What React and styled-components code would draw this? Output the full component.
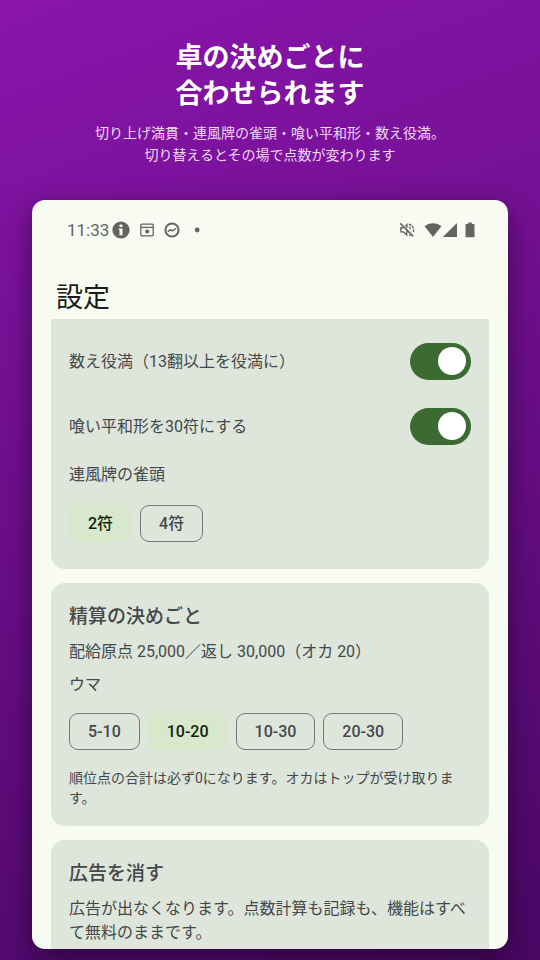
import React, { useState } from "react";
import styled, { createGlobalStyle } from "styled-components";

const GlobalStyle = createGlobalStyle`
  *, *::before, *::after {
    box-sizing: border-box;
  }
  body {
    margin: 0;
  }
  h1, h2, h3, p {
    margin: 0;
  }
  button, input {
    font: inherit;
  }
`;

//page
const Page = styled.div`
  display: flex;
  flex-direction: column;
  height: 100vh;
  padding: 38px 32px 11px;
  overflow: hidden;
  background: linear-gradient(160deg, #8a15ac 0%, #4a0764 100%);
  font-family: Roboto, "Noto Sans CJK JP", sans-serif;
  color: #44484a;
`;

const Intro = styled.header`
  margin-bottom: 35px;
  text-align: center;
  font-family: "Noto Sans CJK JP", sans-serif;
`;

const Headline = styled.h1`
  margin-bottom: 11px;
  font-size: 27px;
  line-height: 36px;
  font-weight: 700;
  color: #fff;
`;

const Lead = styled.p`
  font-size: 14px;
  line-height: 22px;
  color: #f0d9f6;
`;

const Phone = styled.main`
  display: flex;
  flex: 1;
  flex-direction: column;
  min-height: 0;
  overflow: hidden;
  border-radius: 13px;
  background: #f8fbf2;
  box-shadow: 0 10px 30px rgba(0, 0, 0, 0.45);
`;

//status bar
const StatusBar = styled.div`
  display: flex;
  flex: none;
  align-items: center;
  justify-content: space-between;
  height: 60px;
  padding: 0 33px 0 35px;
  color: #62655f;
`;

const StatusGroup = styled.div`
  display: flex;
  align-items: center;
  gap: ${(props) => props.$gap}px;
`;

const Clock = styled.span`
  margin-right: -7px;
  font-size: 17px;
  line-height: 20px;
`;

const Glyph = styled.svg`
  display: block;
  flex: none;
`;

const ScreenTitle = styled.h2`
  flex: none;
  padding: 20px 24px 3px;
  font-size: 27px;
  line-height: 36px;
  font-weight: 400;
  color: #1a1c19;
`;

//settings
const Cards = styled.div`
  display: flex;
  flex-direction: column;
  flex: 1;
  gap: 14px;
  min-height: 0;
  padding: 0 19px;
  overflow: hidden;
`;

const Card = styled.section`
  display: flex;
  flex: none;
  flex-direction: column;
  gap: 9px;
  padding: ${(props) => (props.$scrolled ? "14px" : "20px")} 18px 18px;
  border-radius: ${(props) => (props.$scrolled ? "0 0 14px 14px" : "14px")};
  background: #dee5da;
`;

const CardTitle = styled.h3`
  font-size: 19px;
  line-height: 28px;
  font-weight: 500;
`;

const Text = styled.p`
  font-size: 16px;
  line-height: 24px;
`;

const Note = styled.p`
  font-size: 14px;
  line-height: 20px;
`;

const SwitchRow = styled.label`
  display: flex;
  align-items: center;
  justify-content: space-between;
  min-height: 56px;
  font-size: 16px;
  line-height: 24px;
`;

const SwitchLabel = styled.span`
  padding-top: 2px;
`;

const Switch = styled.input`
  appearance: none;
  display: flex;
  align-items: center;
  justify-content: ${(props) => (props.checked ? "flex-end" : "flex-start")};
  flex: none;
  width: 61px;
  height: 37px;
  margin: 0;
  padding: 0 5px;
  border-radius: 19px;
  background: ${(props) => (props.checked ? "#3b6a32" : "#73796e")};
  cursor: pointer;

  &::before {
    content: "";
    width: 28px;
    height: 28px;
    border-radius: 50%;
    background: #fff;
  }
`;

const ChipGroup = styled.div`
  display: flex;
  align-items: center;
  gap: 8px;
  min-height: 37px;
  margin: ${(props) => (props.$tight ? "7px" : "9px")} 0 9px;
`;

const ChipButton = styled.button`
  height: 37px;
  padding: 0 18px;
  border: 1px solid ${(props) => (props.$active ? "#d7e8cd" : "#75787a")};
  border-radius: 9px;
  background: ${(props) => (props.$active ? "#d7e8cd" : "transparent")};
  color: ${(props) => (props.$active ? "#121f0e" : "#44484a")};
  font-size: 16px;
  line-height: 24px;
  font-weight: 500;
  white-space: nowrap;
  cursor: pointer;
`;

const Chips = ({ label, options, value, onChange, tight }) => (
  <ChipGroup role="group" aria-label={label} $tight={tight}>
    {options.map((option) => (
      <ChipButton
        key={option}
        type="button"
        $active={option === value}
        aria-pressed={option === value}
        onClick={() => onChange(option)}
      >
        {option}
      </ChipButton>
    ))}
  </ChipGroup>
);

const InfoIcon = () => (
  <Glyph width="18" height="18" viewBox="0 0 18 18">
    <circle cx="9" cy="9" r="8.6" fill="currentColor" />
    <path d="M7.5 3.5h3v2.4h-3zM6.8 7.4h3.7v6.8H7.5V9H6.8z" fill="#f8fbf2" />
  </Glyph>
);

const CalendarIcon = () => (
  <Glyph width="14" height="14" viewBox="0 0 14 14" fill="none">
    <rect
      x="0.8"
      y="1.2"
      width="12.4"
      height="11.6"
      rx="1"
      stroke="currentColor"
      strokeWidth="1.3"
    />
    <path d="M1 4.4h12" stroke="currentColor" strokeWidth="1.3" />
    <circle cx="7.2" cy="8.6" r="2" fill="currentColor" />
  </Glyph>
);

const ActivityIcon = () => (
  <Glyph width="16" height="16" viewBox="0 0 16 16" fill="none" stroke="currentColor">
    <circle cx="8" cy="8" r="6.6" strokeWidth="2" />
    <path d="M3.8 9.6l2.8-2 2 1.2 3.6-2.6" strokeWidth="1.4" />
  </Glyph>
);

const DotIcon = () => (
  <Glyph width="12" height="6" viewBox="0 0 12 6">
    <circle cx="7.2" cy="3" r="2.4" fill="currentColor" />
  </Glyph>
);

const MutedIcon = () => (
  <Glyph width="18" height="16" viewBox="0 0 18 16" fill="none" stroke="currentColor">
    <path d="M1.2 1.4l13 13" strokeWidth="1.5" />
    <path d="M4.6 5.7H1.9v4.2h2.6l3.2 3V8.4" strokeWidth="1.4" />
    <path d="M6.4 4.3l1.5-1.5v3" strokeWidth="1.4" />
    <path
      d="M10 2.2a6 6 0 0 1 3.8 8.8M9.9 5.2a3 3 0 0 1 1.7 3.3M10 13.6l1.4-.6"
      strokeWidth="1.4"
      strokeDasharray="2.6 1"
    />
  </Glyph>
);

const WifiIcon = () => (
  <Glyph width="18" height="16" viewBox="0 0 18 16">
    <path d="M.6 4.2C5.4.3 12.6.3 17.4 4.2L9 15z" fill="currentColor" />
  </Glyph>
);

const SignalIcon = () => (
  <Glyph width="16" height="16" viewBox="0 0 16 16">
    <path d="M15 .9V15H.8z" fill="currentColor" />
  </Glyph>
);

const BatteryIcon = () => (
  <Glyph width="10" height="16" viewBox="0 0 10 16">
    <path
      d="M3.2.4h3.6v1.5h1.7q1 0 1 1v11.4q0 1-1 1h-7q-1 0-1-1V2.9q0-1 1-1h1.7z"
      fill="currentColor"
    />
  </Glyph>
);

const App = () => {
  const [countedYakuman, setCountedYakuman] = useState(true);
  const [openPinfu, setOpenPinfu] = useState(true);
  const [windPair, setWindPair] = useState("2符");
  const [uma, setUma] = useState("10-20");

  return (
    <Page>
      <GlobalStyle />
      <Intro>
        <Headline>
          卓の決めごとに
          <br />
          合わせられます
        </Headline>
        <Lead>
          切り上げ満貫・連風牌の雀頭・喰い平和形・数え役満。
          <br />
          切り替えるとその場で点数が変わります
        </Lead>
      </Intro>

      <Phone>
        <StatusBar>
          <StatusGroup $gap={10}>
            <Clock>11:33</Clock>
            <InfoIcon />
            <CalendarIcon />
            <ActivityIcon />
            <DotIcon />
          </StatusGroup>
          <StatusGroup $gap={7}>
            <MutedIcon />
            <StatusGroup $gap={0}>
              <WifiIcon />
              <SignalIcon />
            </StatusGroup>
            <BatteryIcon />
          </StatusGroup>
        </StatusBar>

        <ScreenTitle>設定</ScreenTitle>

        <Cards>
          <Card $scrolled>
            <SwitchRow>
              <SwitchLabel>数え役満（13翻以上を役満に）</SwitchLabel>
              <Switch
                type="checkbox"
                role="switch"
                checked={countedYakuman}
                onChange={() => setCountedYakuman(!countedYakuman)}
              />
            </SwitchRow>
            <SwitchRow>
              <SwitchLabel>喰い平和形を30符にする</SwitchLabel>
              <Switch
                type="checkbox"
                role="switch"
                checked={openPinfu}
                onChange={() => setOpenPinfu(!openPinfu)}
              />
            </SwitchRow>
            <Text>連風牌の雀頭</Text>
            <Chips
              label="連風牌の雀頭"
              options={["2符", "4符"]}
              value={windPair}
              onChange={setWindPair}
            />
          </Card>

          <Card>
            <CardTitle>精算の決めごと</CardTitle>
            <Text>配給原点 25,000／返し 30,000（オカ 20）</Text>
            <Text>ウマ</Text>
            <Chips
              label="ウマ"
              options={["5-10", "10-20", "10-30", "20-30"]}
              value={uma}
              onChange={setUma}
              tight
            />
            <Note>順位点の合計は必ず0になります。オカはトップが受け取ります。</Note>
          </Card>

          <Card>
            <CardTitle>広告を消す</CardTitle>
            <Text>
              広告が出なくなります。点数計算も記録も、機能はすべて無料のままです。
            </Text>
          </Card>
        </Cards>
      </Phone>
    </Page>
  );
};

export default App;
